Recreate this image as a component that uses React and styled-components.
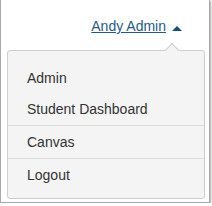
import React from 'react';
import styled, { createGlobalStyle } from 'styled-components';

const GlobalStyle = createGlobalStyle`
  html, body {
    margin: 0;
    padding: 0;
    background: #fff;
  }
  body {
    font-family: "Liberation Sans", Arial, Helvetica, sans-serif;
  }
`;

const Frame = styled.div`
  box-sizing: border-box;
  width: 210px;
  height: 203px;
  background: #fff;
  border: 1px solid #a9a9a9;
  border-top: none;
  box-shadow: 1px 1px 2px rgba(0, 0, 0, 0.35);
  padding: 16px 0 0 6px;
`;

const Header = styled.div`
  display: flex;
  align-items: center;
  justify-content: flex-end;
  height: 20px;
  padding-right: 23px;
  width: 198px;
  box-sizing: border-box;
`;

const UserLink = styled.a`
  font-size: 14px;
  line-height: 20px;
  color: #1f5a8b;
  text-decoration: underline;
  cursor: pointer;
`;

const Caret = styled.span`
  width: 0;
  height: 0;
  margin-left: 6px;
  margin-top: 5px;
  border-left: 5px solid transparent;
  border-right: 5px solid transparent;
  border-bottom: 5px solid #124f7b;
`;

const Panel = styled.div`
  position: relative;
  box-sizing: border-box;
  width: 198px;
  margin-top: 14px;
  background: #f4f4f4;
  border: 1px solid #cdcdcd;
  border-radius: 3px;
  padding-bottom: 7px;

  &::before {
    content: '';
    position: absolute;
    left: 159px;
    top: -6px;
    width: 10px;
    height: 10px;
    box-sizing: border-box;
    background: #f4f4f4;
    border-top: 1px solid #cdcdcd;
    border-left: 1px solid #cdcdcd;
    transform: rotate(45deg);
  }
`;

const Group = styled.div`
  padding-top: ${p => (p.first ? '12px' : '0')};
  border-top: ${p => (p.first ? 'none' : '1px solid #dcdcdc')};
`;

const Item = styled.div`
  font-size: 14px;
  line-height: ${p => p.h || 31}px;
  padding-left: 19px;
  color: #333;
  cursor: pointer;
`;

export default function App() {
  return (
    <>
      <GlobalStyle />
      <Frame>
        <Header>
          <UserLink>Andy Admin</UserLink>
          <Caret />
        </Header>
        <Panel>
          <Group first>
            <Item>Admin</Item>
            <Item>Student Dashboard</Item>
          </Group>
          <Group>
            <Item h={32}>Canvas</Item>
          </Group>
          <Group>
            <Item h={32}>Logout</Item>
          </Group>
        </Panel>
      </Frame>
    </>
  );
}
